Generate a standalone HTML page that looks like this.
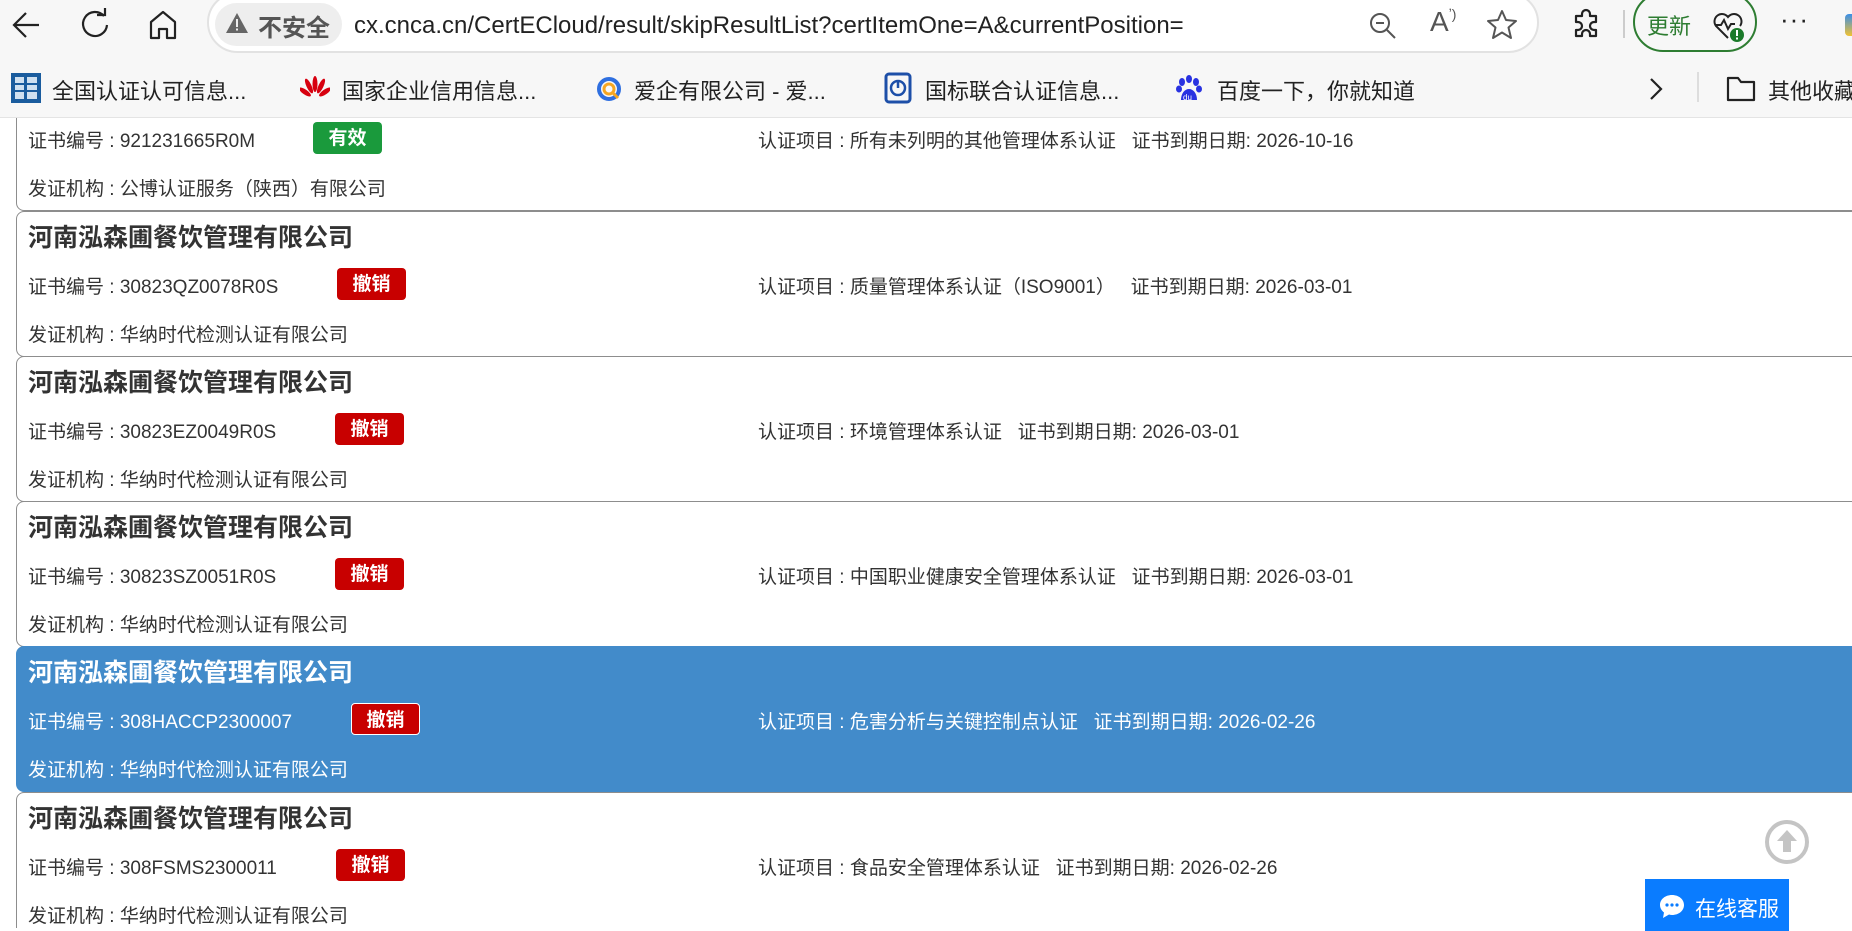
<!DOCTYPE html>
<html><head><meta charset="utf-8">
<style>
*{margin:0;padding:0;box-sizing:border-box}
body{width:1852px;height:928px;overflow:hidden;background:#fff;font-family:"Liberation Sans","Noto Sans CJK SC",sans-serif;position:relative;color:#333}
.abs{position:absolute}
#top{left:0;top:0;width:1852px;height:118px;background:#f7f7f7;border-bottom:1px solid #e4e4e4}
#url{left:207px;top:-8px;width:1332px;height:61px;background:#fff;border:2px solid #e2e2e2;border-radius:31px}
#sec{left:215px;top:3px;width:127px;height:43px;background:#eeeeee;border-radius:22px}
.bm{font-size:22px;color:#222;top:74px;white-space:nowrap}
#content{left:0;top:118px;width:1852px;height:810px;overflow:hidden}
.card{left:16px;width:1850px;height:146px;border:1.5px solid #8d8d8d;border-radius:8px;background:#fff}
.t{left:11px;top:6px;font-size:25px;font-weight:bold;color:#333;white-space:nowrap}
.r{font-size:19px;color:#333;white-space:nowrap}
.badge{height:32px;width:69px;border-radius:4px;color:#fff;font-weight:bold;font-size:19px;text-align:center;line-height:34px}
.red{background:#c80000}
.green{background:#1a9a3c}
.blue{background:#428bca;border-color:#428bca}
.blue .t,.blue .r{color:#fff}
</style></head><body>
<div id="top" class="abs"></div>
<svg class="abs" style="left:10px;top:8px" width="34" height="34" viewBox="0 0 34 34"><path d="M29 17H5M16 5L4 17l12 12" fill="none" stroke="#222" stroke-width="2.2"/></svg>
<svg class="abs" style="left:78px;top:8px" width="34" height="34" viewBox="0 0 34 34"><path d="M26 8A12 12 0 1 0 29 17" fill="none" stroke="#222" stroke-width="2.2"/><path d="M19 7h8V0" fill="none" stroke="#222" stroke-width="2.2"/></svg>
<svg class="abs" style="left:146px;top:8px" width="34" height="34" viewBox="0 0 34 34"><path d="M5 30V14L17 4l12 10v16h-8v-9h-8v9z" fill="none" stroke="#222" stroke-width="2.2" stroke-linejoin="round"/></svg>
<div id="url" class="abs"></div>
<div id="sec" class="abs"></div>
<svg class="abs" style="left:225px;top:12px" width="24" height="22" viewBox="0 0 24 22"><path d="M12 1L23 21H1z" fill="#666"/><rect x="11" y="7" width="2" height="8" fill="#eee"/><rect x="11" y="16.5" width="2" height="2" fill="#eee"/></svg>
<div class="abs" style="left:258px;top:8px;font-size:24px;font-weight:bold;color:#555">不安全</div>
<div class="abs" style="left:354px;top:12px;font-size:24px;color:#222;white-space:nowrap">cx.cnca.cn/CertECloud/result/skipResultList?certItemOne=A&amp;currentPosition=</div>
<svg class="abs" style="left:1367px;top:10px" width="32" height="32" viewBox="0 0 32 32"><circle cx="13" cy="13" r="9" fill="none" stroke="#555" stroke-width="2"/><path d="M9 13h8M20 20l8 8" stroke="#555" stroke-width="2"/></svg>
<div class="abs" style="left:1430px;top:6px;font-size:28px;color:#555">A<span style="font-size:14px;vertical-align:top">ʼ)</span></div>
<svg class="abs" style="left:1485px;top:8px" width="34" height="34" viewBox="0 0 34 34"><path d="M17 3l4 9 10 1-7.5 6.5L26 30l-9-5.5L8 30l2.5-10.5L3 13l10-1z" fill="none" stroke="#555" stroke-width="2" stroke-linejoin="round"/></svg>
<svg class="abs" style="left:1570px;top:8px" width="34" height="34" viewBox="0 0 34 34"><path d="M12 6a4 4 0 0 1 8 0v2h6v6h-2a4 4 0 0 0 0 8h2v6h-6v-2a4 4 0 0 0-8 0v2H6v-6h2a4 4 0 0 0 0-8H6V8h6z" fill="none" stroke="#222" stroke-width="2.2" stroke-linejoin="round"/></svg>
<div class="abs" style="left:1623px;top:10px;width:2px;height:28px;background:#ccc"></div>
<div class="abs" style="left:1633px;top:-8px;width:124px;height:60px;border:2px solid #2e7d32;border-radius:30px"></div>
<div class="abs" style="left:1647px;top:9px;font-size:22px;color:#2e7d32">更新</div>
<svg class="abs" style="left:1711px;top:8px" width="36" height="36" viewBox="0 0 36 36"><path d="M17 30L5 18a7 7 0 0 1 12-9 7 7 0 0 1 12 9" fill="none" stroke="#222" stroke-width="2"/><path d="M4 17h6l3-5 4 9 3-5h4" fill="none" stroke="#222" stroke-width="2"/><circle cx="26" cy="27" r="7" fill="#1b7a2a"/><rect x="25" y="22" width="2" height="6" fill="#fff"/><rect x="25" y="29.5" width="2" height="2" fill="#fff"/></svg>
<div class="abs" style="left:1780px;top:4px;font-size:26px;color:#222;letter-spacing:1px">···</div>
<div class="abs" style="left:1845px;top:14px;width:7px;height:22px;background:linear-gradient(#3a8fe8,#f1c232);border-radius:4px 0 0 4px"></div>
<svg class="abs" style="left:11px;top:73px" width="30" height="30" viewBox="0 0 30 30"><rect width="30" height="30" fill="#1a5c9e"/><rect x="4" y="4" width="9" height="22" fill="#cfe0f0"/><rect x="16" y="4" width="10" height="22" fill="#cfe0f0"/><path d="M4 11h9M4 18h9M16 11h10M16 18h10" stroke="#1a5c9e" stroke-width="2"/></svg>
<div class="abs bm" style="left:52px">全国认证认可信息...</div>
<svg class="abs" style="left:300px;top:75px" width="30" height="26" viewBox="0 0 30 26"><g fill="#d7000f"><ellipse cx="15" cy="9" rx="2.5" ry="8"/><ellipse cx="9" cy="11" rx="2.5" ry="8" transform="rotate(-25 9 11)"/><ellipse cx="21" cy="11" rx="2.5" ry="8" transform="rotate(25 21 11)"/><ellipse cx="5" cy="17" rx="2.5" ry="7" transform="rotate(-55 5 17)"/><ellipse cx="25" cy="17" rx="2.5" ry="7" transform="rotate(55 25 17)"/></g></svg>
<div class="abs bm" style="left:342px">国家企业信用信息...</div>
<svg class="abs" style="left:595px;top:75px" width="28" height="28" viewBox="0 0 28 28"><circle cx="14" cy="14" r="10" fill="none" stroke="#2f6fe0" stroke-width="4"/><circle cx="14" cy="14" r="5" fill="none" stroke="#f5a623" stroke-width="3"/><path d="M18 18l5 5" stroke="#f5a623" stroke-width="3"/></svg>
<div class="abs bm" style="left:634px">爱企有限公司 - 爱...</div>
<svg class="abs" style="left:884px;top:72px" width="30" height="32" viewBox="0 0 30 32"><rect x="2" y="2" width="24" height="28" rx="3" fill="none" stroke="#1d4fa8" stroke-width="3"/><circle cx="14" cy="16" r="7" fill="none" stroke="#1d4fa8" stroke-width="2.5"/><path d="M14 8v8" stroke="#1d4fa8" stroke-width="2.5"/></svg>
<div class="abs bm" style="left:925px">国标联合认证信息...</div>
<svg class="abs" style="left:1175px;top:74px" width="28" height="30" viewBox="0 0 28 30"><g fill="#2932e1"><ellipse cx="7" cy="8" rx="3" ry="4"/><ellipse cx="14" cy="5" rx="3" ry="4"/><ellipse cx="21" cy="8" rx="3" ry="4"/><ellipse cx="4" cy="15" rx="3" ry="3.5"/><ellipse cx="24" cy="15" rx="3" ry="3.5"/><path d="M6 26c0-7 4-11 8-11s8 4 8 11z"/></g><text x="8" y="26" font-size="8" fill="#fff" font-family="Liberation Sans">du</text></svg>
<div class="abs bm" style="left:1217px">百度一下，你就知道</div>
<svg class="abs" style="left:1646px;top:76px" width="20" height="26" viewBox="0 0 20 26"><path d="M5 3l10 10L5 23" fill="none" stroke="#222" stroke-width="2.2"/></svg>
<div class="abs" style="left:1697px;top:72px;width:2px;height:30px;background:#ddd"></div>
<svg class="abs" style="left:1726px;top:74px" width="30" height="28" viewBox="0 0 30 28"><path d="M2 4h10l3 4h13v18H2z" fill="none" stroke="#222" stroke-width="2.2" stroke-linejoin="round"/></svg>
<div class="abs bm" style="left:1768px">其他收藏</div>

<div id="content" class="abs">
<div class="abs card" style="top:-53px">
  <div class="abs r" style="left:11px;top:60px">证书编号 : 921231665R0M</div>
  <div class="abs badge green" style="left:296px;top:56px">有效</div>
  <div class="abs r" style="left:741px;top:60px">认证项目 : 所有未列明的其他管理体系认证 &nbsp; 证书到期日期: 2026-10-16</div>
  <div class="abs r" style="left:11px;top:108px">发证机构 : 公博认证服务（陕西）有限公司</div>
</div>
<div class="abs card" style="top:93px">
  <div class="abs t">河南泓森圃餐饮管理有限公司</div>
  <div class="abs r" style="left:11px;top:60px">证书编号 : 30823QZ0078R0S</div>
  <div class="abs badge red" style="left:320px;top:56px">撤销</div>
  <div class="abs r" style="left:741px;top:60px">认证项目 : 质量管理体系认证（ISO9001） &nbsp; 证书到期日期: 2026-03-01</div>
  <div class="abs r" style="left:11px;top:108px">发证机构 : 华纳时代检测认证有限公司</div>
</div>
<div class="abs card" style="top:238px">
  <div class="abs t">河南泓森圃餐饮管理有限公司</div>
  <div class="abs r" style="left:11px;top:60px">证书编号 : 30823EZ0049R0S</div>
  <div class="abs badge red" style="left:318px;top:56px">撤销</div>
  <div class="abs r" style="left:741px;top:60px">认证项目 : 环境管理体系认证 &nbsp; 证书到期日期: 2026-03-01</div>
  <div class="abs r" style="left:11px;top:108px">发证机构 : 华纳时代检测认证有限公司</div>
</div>
<div class="abs card" style="top:383px">
  <div class="abs t">河南泓森圃餐饮管理有限公司</div>
  <div class="abs r" style="left:11px;top:60px">证书编号 : 30823SZ0051R0S</div>
  <div class="abs badge red" style="left:318px;top:56px">撤销</div>
  <div class="abs r" style="left:741px;top:60px">认证项目 : 中国职业健康安全管理体系认证 &nbsp; 证书到期日期: 2026-03-01</div>
  <div class="abs r" style="left:11px;top:108px">发证机构 : 华纳时代检测认证有限公司</div>
</div>
<div class="abs card blue" style="top:528px">
  <div class="abs t" style="color:#fff">河南泓森圃餐饮管理有限公司</div>
  <div class="abs r" style="left:11px;top:60px">证书编号 : 308HACCP2300007</div>
  <div class="abs badge red" style="left:334px;top:56px;border:1px solid #fff">撤销</div>
  <div class="abs r" style="left:741px;top:60px">认证项目 : 危害分析与关键控制点认证 &nbsp; 证书到期日期: 2026-02-26</div>
  <div class="abs r" style="left:11px;top:108px">发证机构 : 华纳时代检测认证有限公司</div>
</div>
<div class="abs card" style="top:674px">
  <div class="abs t">河南泓森圃餐饮管理有限公司</div>
  <div class="abs r" style="left:11px;top:60px">证书编号 : 308FSMS2300011</div>
  <div class="abs badge red" style="left:319px;top:56px">撤销</div>
  <div class="abs r" style="left:741px;top:60px">认证项目 : 食品安全管理体系认证 &nbsp; 证书到期日期: 2026-02-26</div>
  <div class="abs r" style="left:11px;top:108px">发证机构 : 华纳时代检测认证有限公司</div>
</div>
</div>

<svg class="abs" style="left:1764px;top:819px" width="46" height="46" viewBox="0 0 46 46"><circle cx="23" cy="23" r="20" fill="#fff" stroke="#c4c4c4" stroke-width="4"/><path d="M23 11l10 11h-6v11h-8V22h-6z" fill="#c4c4c4"/></svg>
<div class="abs" style="left:1645px;top:879px;width:144px;height:52px;background:#0a7cff"></div>
<svg class="abs" style="left:1658px;top:893px" width="28" height="26" viewBox="0 0 28 26"><path d="M14 2C7 2 2 6.5 2 12c0 3 1.5 5.5 4 7.5L5 25l6-3.5c1 .3 2 .5 3 .5 7 0 12-4.5 12-10S21 2 14 2z" fill="#fff"/><circle cx="9" cy="12" r="1.6" fill="#0a7cff"/><circle cx="14" cy="12" r="1.6" fill="#0a7cff"/><circle cx="19" cy="12" r="1.6" fill="#0a7cff"/></svg>
<div class="abs" style="left:1695px;top:893px;font-size:21px;color:#fff">在线客服</div>
</body></html>
